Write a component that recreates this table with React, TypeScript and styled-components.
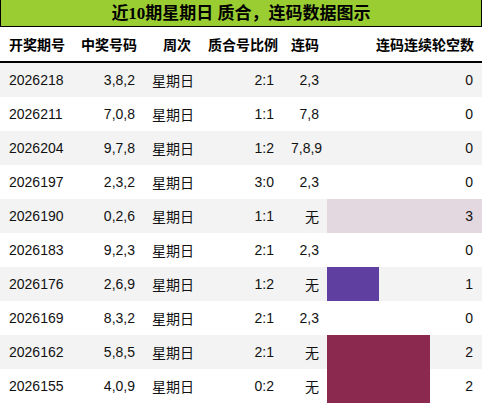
import { createGlobalStyle } from "styled-components";
import styled from "styled-components";

const GlobalStyle = createGlobalStyle`
  body {
    margin: 0;
    background: #ffffff;
    font-family: "Liberation Sans", "Noto Sans CJK SC", sans-serif;
  }
`;

const Wrapper = styled.div`
  width: 482px;
`;

const Title = styled.div`
  height: 26px;
  line-height: 27px;
  background-color: #9acd32;
  border: 1px solid #000;
  border-top: none;
  text-align: center;
  font-family: "Liberation Serif", "Noto Sans CJK SC", serif;
  font-weight: bold;
  font-size: 17px;
  color: #000;
  box-sizing: border-box;
  height: 27px;
`;

const Table = styled.table`
  width: 482px;
  border-collapse: collapse;
  table-layout: fixed;
  font-size: 14px;
  color: #111;
`;

const HeadCell = styled.th<{ $align?: string }>`
  height: 34px;
  padding: 0 8px 0 9px;
  font-weight: bold;
  color: #000;
  text-align: ${(p) => p.$align || "right"};
  border-bottom: 2px solid #000;
  white-space: nowrap;
`;

const Row = styled.tr<{ $odd: boolean }>`
  background-color: ${(p) => (p.$odd ? "#f3f3f3" : "#ffffff")};
`;

const Cell = styled.td<{ $align?: string }>`
  height: 34px;
  padding: 0 8px 0 9px;
  text-align: ${(p) => p.$align || "right"};
  white-space: nowrap;
`;

const BarCell = styled(Cell)<{ $pct: number; $color: string }>`
  padding-right: 9px;
  background: ${(p) =>
    p.$pct > 0
      ? `linear-gradient(90deg, ${p.$color} ${p.$pct}%, transparent ${p.$pct}%)`
      : "transparent"};
`;

const rows = [
  ["2026218", "3,8,2", "2:1", "2,3", 0],
  ["2026211", "7,0,8", "1:1", "7,8", 0],
  ["2026204", "9,7,8", "1:2", "7,8,9", 0],
  ["2026197", "2,3,2", "3:0", "2,3", 0],
  ["2026190", "0,2,6", "1:1", "无", 3],
  ["2026183", "9,2,3", "2:1", "2,3", 0],
  ["2026176", "2,6,9", "1:2", "无", 1],
  ["2026169", "8,3,2", "2:1", "2,3", 0],
  ["2026162", "5,8,5", "2:1", "无", 2],
  ["2026155", "4,0,9", "0:2", "无", 2],
] as const;

const barColors: Record<number, string> = {
  1: "#5f40a1",
  2: "#8b2a4e",
  3: "#e3d7e0",
};

const widths = [72, 71, 56, 83, 45, 155];

export default function App() {
  const max = 3;
  return (
    <>
      <GlobalStyle />
      <Wrapper>
        <Title>近10期星期日 质合，连码数据图示</Title>
        <Table>
          <colgroup>
            {widths.map((w, i) => (
              <col key={i} style={{ width: w }} />
            ))}
          </colgroup>
          <thead>
            <tr>
              <HeadCell $align="left">开奖期号</HeadCell>
              <HeadCell>中奖号码</HeadCell>
              <HeadCell>周次</HeadCell>
              <HeadCell>质合号比例</HeadCell>
              <HeadCell>连码</HeadCell>
              <HeadCell>连码连续轮空数</HeadCell>
            </tr>
          </thead>
          <tbody>
            {rows.map((r, i) => (
              <Row key={r[0]} $odd={i % 2 === 0}>
                <Cell $align="left">{r[0]}</Cell>
                <Cell>{r[1]}</Cell>
                <Cell>星期日</Cell>
                <Cell>{r[2]}</Cell>
                <Cell>{r[3]}</Cell>
                <BarCell $pct={(r[4] / max) * 100} $color={barColors[r[4]] || "transparent"}>
                  {r[4]}
                </BarCell>
              </Row>
            ))}
          </tbody>
        </Table>
      </Wrapper>
    </>
  );
}
